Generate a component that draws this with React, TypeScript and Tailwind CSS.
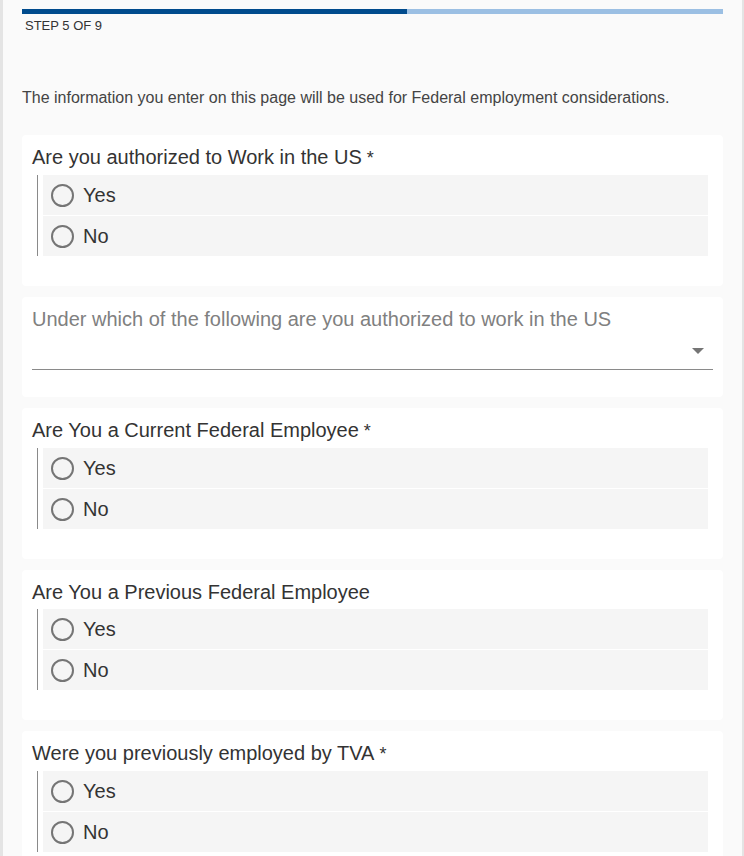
import React from 'react';

const questions = [
  { label: 'Are you authorized to Work in the US', required: true },
  { label: 'Are You a Current Federal Employee', required: true },
  { label: 'Are You a Previous Federal Employee', required: false },
  { label: 'Were you previously employed by TVA', required: true },
];

function RadioRow({ text }: { text: string }) {
  return (
    <label className="flex h-[40px] items-center bg-[#f5f5f5] cursor-pointer">
      <span className="ml-[8px] h-[23px] w-[23px] rounded-full border-2 border-[#757575]" />
      <span className="ml-[9px] text-[20px] text-[#333]">{text}</span>
    </label>
  );
}

function YesNoCard({ label, required }: { label: string; required: boolean }) {
  return (
    <div className="rounded-[4px] bg-white px-[10px] pt-[11px] pb-[30px]">
      <div className="mb-[6px] text-[20px] leading-[22px] text-[#333]">
        {label}
        {required && <span className="text-[18px]"> *</span>}
      </div>
      <div className="ml-[5px] mr-[5px] flex flex-col gap-[1px] border-l border-[#8a8a8a] pl-[5px]">
        <RadioRow text="Yes" />
        <RadioRow text="No" />
      </div>
    </div>
  );
}

function SelectCard() {
  return (
    <div className="rounded-[4px] bg-white px-[10px] pt-[11px] pb-[27px]">
      <div className="text-[20px] leading-[22px] text-[#808080]">
        Under which of the following are you authorized to work in the US
      </div>
      <div className="flex h-[40px] items-center justify-end border-b border-[#8a8a8a] pr-[9px]">
        <svg width="12" height="6" viewBox="0 0 12 6" className="mt-[2px]">
          <path d="M0 0 L12 0 L6 6 Z" fill="#757575" />
        </svg>
      </div>
    </div>
  );
}

export default function App() {
  return (
    <div
      className="min-h-screen border-l-[3px] border-r-2 border-[#e4e4e4] bg-[#fafafa] px-[19px] pt-[9px]"
      style={{ fontFamily: '"Liberation Sans", Arial, sans-serif' }}
    >
      {/* progress */}
      <div className="flex h-[5px]">
        <div className="w-[385px] bg-[#004b8d]" />
        <div className="flex-1 bg-[#9bbfe3]" />
      </div>
      <div className="mt-[5px] pl-[3px] text-[13px] leading-[14px] text-[#333]">STEP 5 OF 9</div>

      <p className="mt-[56px] text-[16px] leading-[18px] text-[#444]">
        The information you enter on this page will be used for Federal employment considerations.
      </p>

      <div className="mt-[28px] flex flex-col gap-[11px] pb-[20px]">
        <YesNoCard label={questions[0].label} required={questions[0].required} />
        <SelectCard />
        {questions.slice(1).map((q) => (
          <YesNoCard key={q.label} label={q.label} required={q.required} />
        ))}
      </div>
    </div>
  );
}
